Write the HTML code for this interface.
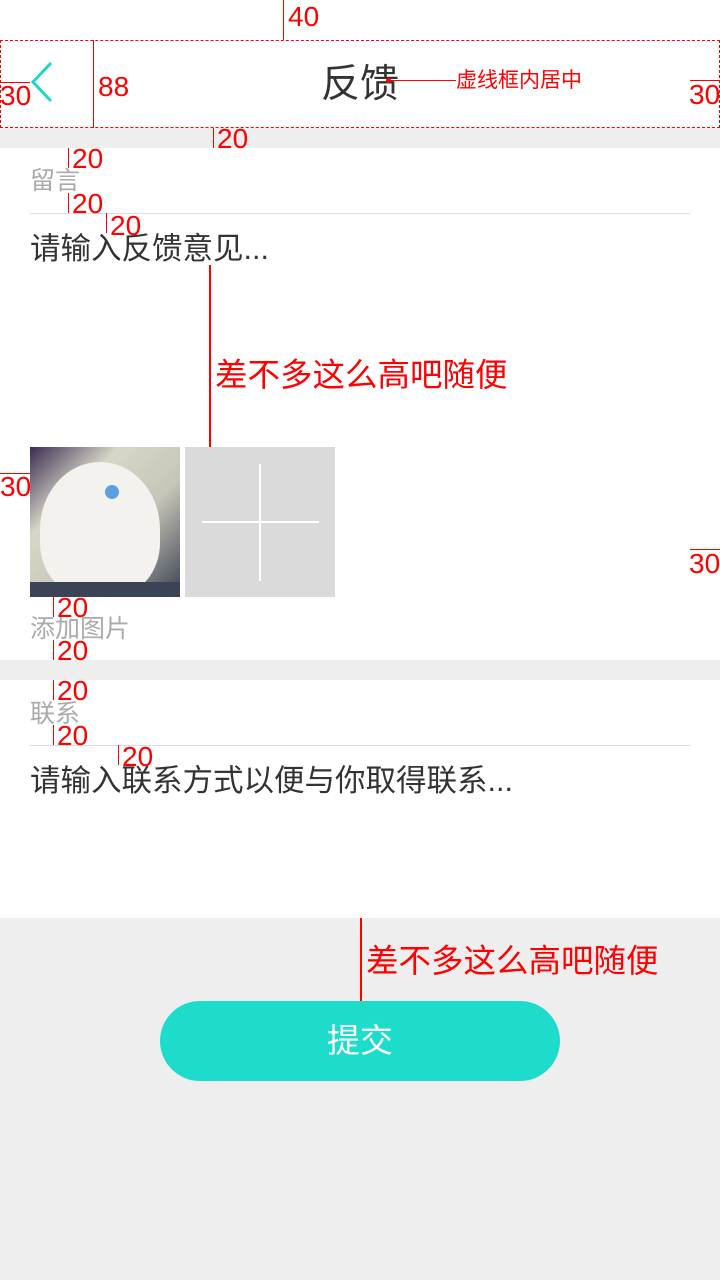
<!DOCTYPE html><html><head><meta charset="utf-8"><style>
*{margin:0;padding:0;box-sizing:border-box}
body{width:720px;height:1280px;background:#eee;position:relative;overflow:hidden;font-family:"Liberation Sans","Noto Sans CJK SC",sans-serif}
.a{position:absolute}
.r{color:#f00;position:absolute;font-size:28px;line-height:1}
.vl{position:absolute;width:1px;background:#f00}
.hl{position:absolute;height:1px;background:#f00}
</style></head><body>
<div class="a" style="left:0;top:0;width:720px;height:128px;background:#fff"></div>
<div class="a" style="left:0;top:148px;width:720px;height:512px;background:#fff"></div>
<div class="a" style="left:0;top:680px;width:720px;height:238px;background:#fff"></div>
<div class="a" style="left:0;top:40px;width:720px;height:88px;border:1px dashed #f00"></div>
<svg class="a" style="left:28px;top:60px" width="30" height="46"><polyline points="23,3 5,22 23,41" fill="none" stroke="#1ed6c6" stroke-width="3"/></svg>
<div class="a" style="left:0;top:62px;width:720px;text-align:center;font-size:39px;color:#333;line-height:46px">反馈</div>
<div class="a" style="left:30px;top:166px;font-size:25px;color:#aaa;line-height:30px">留言</div>
<div class="a" style="left:30px;top:213px;width:660px;height:1px;background:#ddd"></div>
<div class="a" style="left:30px;top:230px;font-size:30.5px;color:#333;line-height:38px">请输入反馈意见...</div>
<div class="a" style="left:30px;top:447px;width:150px;height:150px;background:linear-gradient(135deg,#3a2c50 0%,#d8d6c8 30%,#c8c6b8 60%,#3a4050 100%);overflow:hidden">
<div class="a" style="left:10px;top:15px;width:120px;height:135px;background:#f4f2ee;border-radius:50% 50% 40% 40%"></div>
<div class="a" style="left:75px;top:38px;width:14px;height:14px;background:#5aa0e0;border-radius:50%"></div>
<div class="a" style="left:0;top:135px;width:150px;height:15px;background:#3a4456"></div></div>
<div class="a" style="left:185px;top:447px;width:150px;height:150px;background:#dadada"></div>
<div class="a" style="left:202px;top:521px;width:117px;height:2px;background:#fff"></div>
<div class="a" style="left:259px;top:464px;width:2px;height:117px;background:#fff"></div>
<div class="a" style="left:30px;top:614px;font-size:25px;color:#aaa;line-height:30px">添加图片</div>
<div class="a" style="left:30px;top:699px;font-size:25px;color:#aaa;line-height:30px">联系</div>
<div class="a" style="left:30px;top:745px;width:660px;height:1px;background:#ddd"></div>
<div class="a" style="left:30px;top:762px;font-size:30.5px;color:#333;line-height:38px">请输入联系方式以便与你取得联系...</div>
<div class="a" style="left:160px;top:1001px;width:400px;height:80px;border-radius:40px;background:#1ddccc;color:#fff;font-size:33px;text-align:center;line-height:80px">提交</div>
<div class="vl" style="left:283px;top:0;height:40px"></div><div class="r" style="left:288px;top:3px">40</div>
<div class="vl" style="left:93px;top:40px;height:88px"></div><div class="r" style="left:98px;top:73px">88</div>
<div class="hl" style="left:0;top:82px;width:30px"></div><div class="r" style="left:0;top:82px">30</div>
<div class="hl" style="left:690px;top:80px;width:30px"></div><div class="r" style="left:689px;top:81px">30</div>
<div class="hl" style="left:388px;top:80px;width:68px"></div><div class="a" style="left:386px;top:78px;width:5px;height:5px;background:#f00;border-radius:50%"></div>
<div class="r" style="left:456px;top:70px;font-size:21px">虚线框内居中</div>
<div class="vl" style="left:213px;top:128px;height:20px"></div><div class="r" style="left:217px;top:125px">20</div>
<div class="vl" style="left:68px;top:148px;height:20px"></div><div class="r" style="left:72px;top:145px">20</div>
<div class="vl" style="left:68px;top:193px;height:20px"></div><div class="r" style="left:72px;top:190px">20</div>
<div class="vl" style="left:106px;top:213px;height:20px"></div><div class="r" style="left:110px;top:212px">20</div>
<div class="vl" style="left:209px;top:265px;height:182px;width:2px"></div>
<div class="r" style="left:215px;top:359px;font-size:32.5px">差不多这么高吧随便</div>
<div class="hl" style="left:0;top:473px;width:30px"></div><div class="r" style="left:0;top:473px">30</div>
<div class="hl" style="left:690px;top:549px;width:30px"></div><div class="r" style="left:689px;top:550px">30</div>
<div class="vl" style="left:53px;top:597px;height:20px"></div><div class="r" style="left:57px;top:594px">20</div>
<div class="vl" style="left:53px;top:640px;height:20px"></div><div class="r" style="left:57px;top:637px">20</div>
<div class="vl" style="left:53px;top:680px;height:20px"></div><div class="r" style="left:57px;top:677px">20</div>
<div class="vl" style="left:53px;top:725px;height:20px"></div><div class="r" style="left:57px;top:722px">20</div>
<div class="vl" style="left:118px;top:745px;height:20px"></div><div class="r" style="left:122px;top:743px">20</div>
<div class="vl" style="left:360px;top:918px;height:83px;width:2px"></div>
<div class="r" style="left:366px;top:945px;font-size:32.5px">差不多这么高吧随便</div>
</body></html>
